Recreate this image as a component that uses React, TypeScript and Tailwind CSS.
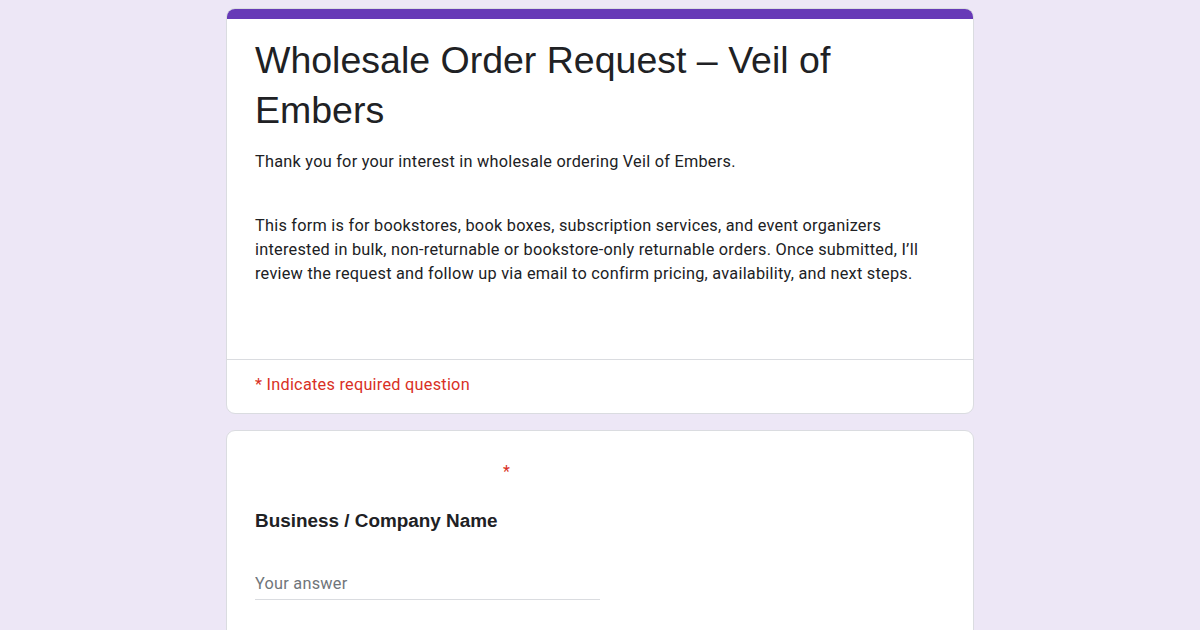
export default function App() {
  return (
    <div className="min-h-[630px] bg-[#ede7f6] pt-2 font-['Roboto',sans-serif]">
      <div className="mx-auto w-[748px]">
        <div className="overflow-hidden rounded-[9px] border border-[#dadce0] bg-white">
          <div className="h-[10px] bg-[#673ab7]" />
          <div className="px-[28px] pb-[73px] pt-[16px]">
            <h1 className="font-['Liberation_Sans',Arial,sans-serif] text-[37.5px] leading-[50px] text-[#202124]">
              Wholesale Order Request – Veil of Embers
            </h1>
            <p className="mt-[15px] text-[16.3px] leading-[24px] tracking-[0.25px] text-[#202124]">
              Thank you for your interest in wholesale ordering Veil of Embers.
            </p>
            <p className="mt-[40px] text-[16.3px] leading-[24px] tracking-[0.25px] text-[#202124]">
              This form is for bookstores, book boxes, subscription services, and event organizers
              interested in bulk, non-returnable or bookstore-only returnable orders. Once submitted, I’ll
              review the request and follow up via email to confirm pricing, availability, and next steps.
            </p>
          </div>
          <div className="border-t border-[#dadce0] px-[28px] pb-[16px] pt-[13px]">
            <p className="text-[16.3px] leading-[24px] tracking-[0.25px] text-[#d93025]">
              * Indicates required question
            </p>
          </div>
        </div>

        <div className="mt-[16px] rounded-[9px] border border-[#dadce0] bg-white px-[28px] pb-[40px] pt-[31px]">
          <div className="pl-[248px] text-[16px] leading-[20px] text-[#d93025]">*</div>
          <h2 className="mt-[27px] font-['Liberation_Sans',Arial,sans-serif] text-[18.9px] font-bold leading-[24px] text-[#202124]">
            Business / Company Name
          </h2>
          <div className="mt-[39px] w-[345px] border-b border-[#dadce0] pb-[3px]">
            <input
              placeholder="Your answer"
              className="w-full text-[16.3px] leading-[24px] tracking-[0.25px] text-[#202124] outline-none placeholder:text-[#70757a]"
            />
          </div>
        </div>
      </div>
    </div>
  );
}
